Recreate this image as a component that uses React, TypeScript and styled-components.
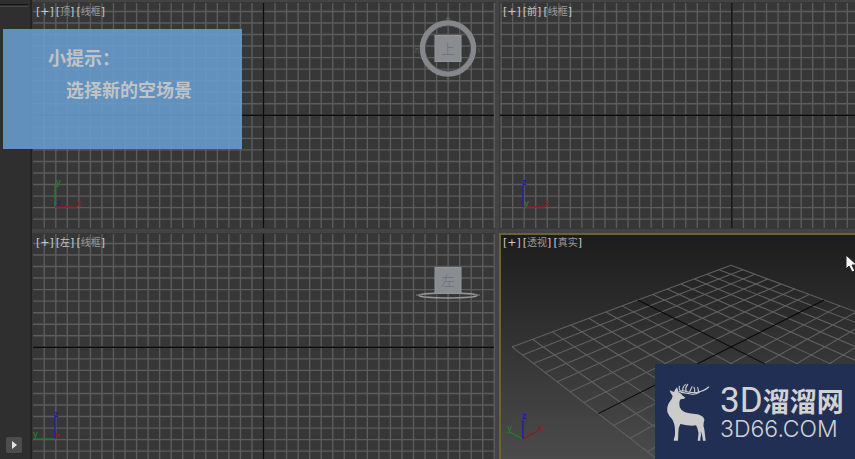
import React from "react";
import styled, { createGlobalStyle } from "styled-components";

const GlobalStyle = createGlobalStyle`
  * { box-sizing: border-box; }
  body { margin: 0; background: #434343; overflow: hidden; }
`;

const cjk = `"Liberation Sans", "Noto Sans CJK SC", sans-serif`;

const Workspace = styled.div`
  position: relative;
  display: grid;
  grid-template-columns: 32px 1fr;
  height: 100vh;
  overflow: hidden;
  font-family: ${cjk};
`;

const Sidebar = styled.aside`
  display: flex;
  flex-direction: column;
  justify-content: space-between;
  align-items: center;
  padding: 4px 2px 6px 0;
  background: #2f2f2f;
  border-right: 2px solid #232323;
`;

const SidebarRule = styled.hr`
  width: 100%;
  height: 3px;
  margin: 0;
  border: 0;
  border-top: 1px solid #141414;
  border-bottom: 1px solid #484848;
`;

const PlayButton = styled.button`
  display: grid;
  place-items: center;
  width: 16px;
  height: 16px;
  padding: 0;
  border: 0;
  border-radius: 2px;
  background: #4d4d4d;
`;

const Viewports = styled.main`
  display: grid;
  grid-template-columns: 463fr 356fr;
  grid-template-rows: 227fr 226fr;
  gap: 4px;
  padding-top: 2px;
  min-width: 0;
  min-height: 0;
`;

const Viewport = styled.section<{ $active?: boolean }>`
  position: relative;
  min-width: 0;
  min-height: 0;
  overflow: hidden;
  background: ${(p) => (p.$active ? "linear-gradient(#1c1c1c, #4b4b4b)" : "#373737")};

  &::after {
    content: "";
    position: absolute;
    inset: 0;
    pointer-events: none;
    border: solid #6d6232;
    border-width: ${(p) => (p.$active ? "2px 0 0 2px" : "0")};
  }
`;

const Scene = styled.svg`
  display: block;
  width: 100%;
  height: 100%;
`;

const Labels = styled.div`
  position: absolute;
  top: 3px;
  left: 4px;
  display: flex;
  gap: 2px;
`;

const LabelButton = styled.button`
  display: flex;
  align-items: center;
  height: 14px;
  padding: 0;
  border: 0;
  background: none;
  color: #c9c9c9;
  font: 11px/14px "DejaVu Sans", sans-serif;
`;

const LabelName = styled.span<{ $bright?: boolean }>`
  padding-bottom: 3px;
  color: ${(p) => (p.$bright ? "#c4c4c4" : "#999999")};
  font: 10px/11px "Noto Sans CJK SC", sans-serif;
`;

const Tip = styled.aside`
  position: absolute;
  top: 29px;
  left: 3px;
  width: 239px;
  height: 120px;
  padding: 12px 20px 0 45px;
  background: rgba(104, 155, 205, 0.9);
  color: #c0c3c6;
  font: 700 18px/32px "Noto Sans CJK SC", sans-serif;
`;

const TipLine = styled.p<{ $indent?: boolean }>`
  margin: 0;
  padding-left: ${(p) => (p.$indent ? "18px" : "0")};
  white-space: nowrap;
`;

const Brand = styled.a`
  position: absolute;
  right: 0;
  bottom: 0;
  display: flex;
  align-items: center;
  gap: 8px;
  width: 200px;
  height: 95px;
  padding-left: 11px;
  background: #222f55;
  color: #d2d2d2;
  text-decoration: none;
`;

const BrandText = styled.span`
  display: flex;
  flex-direction: column;
  padding-top: 4px;
  white-space: nowrap;
`;

const BrandName = styled.span`
  display: flex;
  align-items: center;
  height: 30px;
  font: 700 27px/30px "Noto Sans CJK SC", sans-serif;
`;

const BrandPrefix = styled.span`
  font: 400 35px/30px Roboto, "Liberation Sans", sans-serif;
`;

const BrandDomain = styled.span`
  font: 300 23px/26px Inter, "DejaVu Sans", sans-serif;
`;

const Pointer = styled.svg`
  position: absolute;
  top: 254px;
  right: -3px;
`;

const STEP = 11.54;

function OrthoGrid({ cx, cy }: { cx: number; cy: number }) {
  const xs = Array.from({ length: 41 }, (_, i) => cx + (i - 20) * STEP);
  const ys = Array.from({ length: 21 }, (_, i) => cy + (i - 10) * STEP);
  return (
    <g strokeWidth="1.4">
      <g stroke="#5c5c5c">
        {xs.filter((x) => x > 1 && x < 463).map((x) => (
          <line key={x} x1={x} x2={x} y1="1" y2="226" />
        ))}
        {ys.map((y) => (
          <line key={y} x1="1" x2="462" y1={y} y2={y} />
        ))}
      </g>
      <g stroke="#0c0c0c">
        <line x1={cx} x2={cx} y1="1" y2="226" />
        <line x1="1" x2="462" y1={cy} y2={cy} />
      </g>
    </g>
  );
}

function project(u: number, v: number) {
  const depth = u + v;
  const w = 1 + 0.025 * depth;
  return { x: 233 + (15.71 * (u - v)) / w, y: 114.4 - (7.9 * depth) / w };
}

function FloorLine({ from, to, dark }: { from: [number, number]; to: [number, number]; dark: boolean }) {
  const a = project(...from);
  const b = project(...to);
  return <line x1={a.x} y1={a.y} x2={b.x} y2={b.y} stroke={dark ? "#090909" : "#606060"} />;
}

function PerspectiveGrid() {
  const steps = Array.from({ length: 15 }, (_, i) => i - 7).sort((a, b) => Math.abs(b) - Math.abs(a));
  return (
    <g strokeWidth="1.1">
      {steps.map((s) => (
        <React.Fragment key={s}>
          <FloorLine from={[s, -7]} to={[s, 7]} dark={s === 0} />
          <FloorLine from={[-7, s]} to={[7, s]} dark={s === 0} />
        </React.Fragment>
      ))}
    </g>
  );
}

const RED = "#8c1c24";
const GREEN = "#257a2b";
const BLUE = "#211fa0";

type Axis = { color: string; name: string; dx: number; dy: number; tx: number; ty: number };

function Tripod({ x, y, axes }: { x: number; y: number; axes: Axis[] }) {
  return (
    <g transform={`translate(${x} ${y})`} fontFamily="Liberation Sans, sans-serif" fontSize="9" fontWeight="700" strokeWidth="1.4">
      {axes.map((a) => (
        <g key={a.name}>
          <line x2={a.dx} y2={a.dy} stroke={a.color} />
          <text x={a.tx} y={a.ty} fill={a.color}>{a.name}</text>
        </g>
      ))}
    </g>
  );
}

function ViewCube({ x, y, face, ring }: { x: number; y: number; face: string; ring: "round" | "flat" }) {
  return (
    <g transform={`translate(${x} ${y})`}>
      {ring === "round" ? (
        <>
          <circle r="25.5" fill="none" stroke="#85878a" strokeWidth="5.5" />
          <circle r="22.5" fill="none" stroke="#4c5157" strokeWidth="1" />
          <g fill="#5b5e62" fontSize="5" fontFamily="Noto Sans CJK SC, sans-serif" textAnchor="middle">
            <path d="M-3 -29 0 -32 3 -29Z" />
            <text y="33">南</text>
            <text x="-31" y="3">西</text>
            <text x="31" y="3">东</text>
          </g>
        </>
      ) : (
        <>
          <ellipse cy="15" rx="29" ry="2.4" fill="none" stroke="#969899" strokeWidth="1.5" />
          <path d="M-32 14.5h7M25 14.5h7" stroke="#7c7e80" strokeWidth="1" />
        </>
      )}
      <rect x="-13" y="-13" width="26" height="26" fill="#898c90" stroke="#94979a" />
      <text y="5" textAnchor="middle" fontSize="14" fontWeight="300" fill="#6c7076" fontFamily="Noto Sans CJK SC, sans-serif">
        {face}
      </text>
    </g>
  );
}

function ViewLabels({ view, mode, bright }: { view: string; mode: string; bright?: boolean }) {
  return (
    <Labels>
      <LabelButton>[+]</LabelButton>
      <LabelButton>[<LabelName $bright={bright}>{view}</LabelName>]</LabelButton>
      <LabelButton>[<LabelName>{mode}</LabelName>]</LabelButton>
    </Labels>
  );
}

function SceneCanvas({ children }: { children: React.ReactNode }) {
  return (
    <Scene viewBox="0 0 463 227" preserveAspectRatio="xMinYMin slice" aria-hidden="true">
      {children}
    </Scene>
  );
}

function Deer() {
  return (
    <svg width="46" height="60" viewBox="34 52 138 180" aria-hidden="true">
      <path
        fill="#cbcbcb"
        d="M45 77 58 82Q61 75 67 68Q71 75 70 82L79 87Q83 93 91 98Q91 103 86 103Q79 102 76 105Q72 116 75 127Q79 138 91 143Q103 147 121 148Q137 149 146 158Q151 164 147 174Q145 181 149 194L153 228H145L144 221Q141 204 138 200Q141 211 137 221V228H129L130 220Q134 204 128 190L124 182Q107 185 77 178Q71 187 71 204L70 228H57L58 221Q62 216 61 197Q61 177 52 163Q42 153 38 142Q36 125 44 113Q53 103 54 94Q47 86 45 77Z"
      />
      <g fill="none" stroke="#cbcbcb" strokeWidth="3.4" strokeLinecap="round">
        <path d="M72 82Q80 77 91 79Q107 86 127 83Q149 79 162 67" />
        <path d="M77 79Q72 73 74 65M85 78Q82 69 92 60M94 79Q91 69 99 59M105 81 112 66M120 82Q121 73 118 68M132 81 129 69" />
        <path d="M79 83Q96 85 108 88Q122 91 134 83" />
      </g>
    </svg>
  );
}

export default function App() {
  return (
    <Workspace>
      <GlobalStyle />
      <Sidebar>
        <SidebarRule />
        <PlayButton aria-label="播放">
          <svg width="6" height="8" viewBox="0 0 6 8" aria-hidden="true">
            <path d="M1 0 6 4 1 8Z" fill="#e2e2e2" />
          </svg>
        </PlayButton>
      </Sidebar>

      <Viewports>
        <Viewport>
          <SceneCanvas>
            <OrthoGrid cx={231.5} cy={113.3} />
            <Tripod x={23} y={205} axes={[
              { color: GREEN, name: "y", dx: 0, dy: -22, tx: 1, ty: -22 },
              { color: RED, name: "x", dx: 22, dy: 0, tx: 21, ty: -1 },
              { color: BLUE, name: "z", dx: 0, dy: 0, tx: 1, ty: -1 },
            ]} />
            <ViewCube x={416} y={46.5} face="上" ring="round" />
          </SceneCanvas>
          <ViewLabels view="顶" mode="线框" />
        </Viewport>

        <Viewport>
          <SceneCanvas>
            <OrthoGrid cx={232.9} cy={113.3} />
            <Tripod x={24} y={205} axes={[
              { color: BLUE, name: "z", dx: 0, dy: -22, tx: -1, ty: -22 },
              { color: RED, name: "x", dx: 22, dy: 0, tx: 21, ty: -1 },
              { color: GREEN, name: "y", dx: 0, dy: 0, tx: 1, ty: -1 },
            ]} />
          </SceneCanvas>
          <ViewLabels view="前" mode="线框" bright />
        </Viewport>

        <Viewport>
          <SceneCanvas>
            <OrthoGrid cx={231.5} cy={114.3} />
            <Tripod x={23} y={206} axes={[
              { color: BLUE, name: "z", dx: 0, dy: -22, tx: -1, ty: -22 },
              { color: GREEN, name: "y", dx: -21, dy: 0, tx: -22, ty: -2 },
              { color: RED, name: "x", dx: 0, dy: 0, tx: 0, ty: -1 },
            ]} />
            <ViewCube x={416} y={47.5} face="左" ring="flat" />
          </SceneCanvas>
          <ViewLabels view="左" mode="线框" bright />
        </Viewport>

        <Viewport $active>
          <SceneCanvas>
            <PerspectiveGrid />
            <Tripod x={24} y={207} axes={[
              { color: GREEN, name: "y", dx: -13, dy: -7, tx: -16, ty: -8 },
              { color: RED, name: "x", dx: 16, dy: -9, tx: 15, ty: -8 },
              { color: BLUE, name: "z", dx: 0, dy: -19, tx: -1, ty: -20 },
            ]} />
          </SceneCanvas>
          <ViewLabels view="透视" mode="真实" />
        </Viewport>
      </Viewports>

      <Tip>
        <TipLine>小提示：</TipLine>
        <TipLine $indent>选择新的空场景</TipLine>
      </Tip>

      <Pointer width="13" height="19" viewBox="0 0 13 19" aria-hidden="true">
        <path d="M1 1V15L4 12 7 18 10 17 7 11H12Z" fill="#f5f5f5" stroke="#222" strokeWidth="1" />
      </Pointer>

      <Brand href="#">
        <Deer />
        <BrandText>
          <BrandName><BrandPrefix>3D</BrandPrefix>溜溜网</BrandName>
          <BrandDomain>3D66.COM</BrandDomain>
        </BrandText>
      </Brand>
    </Workspace>
  );
}
